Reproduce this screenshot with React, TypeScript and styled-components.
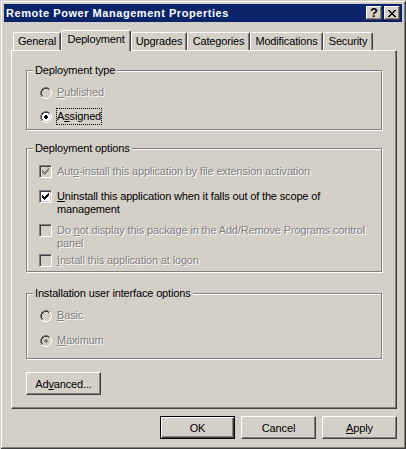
import React from 'react';
import styled, { createGlobalStyle } from 'styled-components';

// classic win2000 palette
const FACE = '#D4D0C8';
const SHADOW = '#808080';
const DARK = '#404040';

const GlobalStyle = createGlobalStyle`
  html, body { margin: 0; padding: 0; background: ${FACE}; }
  body {
    font-family: "Liberation Sans", Arial, sans-serif;
    font-size: 11px;
    letter-spacing: -0.15px;
    color: #000;
  }
`;

const Window = styled.div`
  box-sizing: border-box;
  width: 406px;
  height: 449px;
  padding: 4px;
  display: flex;
  flex-direction: column;
  background: ${FACE};
  box-shadow: inset 1px 1px ${FACE}, inset -1px -1px ${DARK}, inset 2px 2px #fff, inset -2px -2px ${SHADOW};
`;

const TitleBar = styled.div`
  height: 18px;
  display: flex;
  align-items: center;
  padding: 0 2px 0 2px;
  background: #0a246a;
`;

const TitleText = styled.div`
  flex: 1;
  color: #fff;
  font-weight: bold;
  font-size: 11px;
  letter-spacing: 0.55px;
  white-space: nowrap;
`;

const Captions = styled.div`
  display: flex;
  gap: 2px;
`;

const CaptionButton = styled.div`
  box-sizing: border-box;
  width: 16px;
  height: 14px;
  display: flex;
  align-items: center;
  justify-content: center;
  background: ${FACE};
  box-shadow: inset -1px -1px ${DARK}, inset 1px 1px #fff, inset -2px -2px ${SHADOW};
  font-weight: bold;
  font-size: 13px;
  line-height: 12px;
`;

const Body = styled.div`
  display: flex;
  flex-direction: column;
  padding: 8px 0 0 7px;
`;

const TabStrip = styled.div`
  display: flex;
  align-items: flex-end;
  height: 20px;
  padding-left: 2px;
  position: relative;
  z-index: 1;
`;

const Tab = styled.div<{ $w: number; $active?: boolean }>`
  box-sizing: border-box;
  width: ${(p) => p.$w}px;
  height: ${(p) => (p.$active ? 21 : 18)}px;
  margin-bottom: ${(p) => (p.$active ? -1 : 0)}px;
  padding-top: 2px;
  background: ${FACE};
  border-top: 1px solid #fff;
  border-left: 1px solid #fff;
  border-right: 1px solid ${DARK};
  border-radius: 2px 2px 0 0;
  box-shadow: inset -1px 0 ${SHADOW};
  text-align: center;
  line-height: 13px;
  white-space: nowrap;
`;

const Panel = styled.div`
  box-sizing: border-box;
  width: 386px;
  height: 359px;
  padding: 13px 14px 0 14px;
  display: flex;
  flex-direction: column;
  align-items: flex-start;
  background: ${FACE};
  border: 1px solid;
  border-color: #fff ${DARK} ${DARK} #fff;
  box-shadow: inset -1px -1px ${SHADOW};
`;

const Group = styled.fieldset<{ $h: number; $mt?: number }>`
  box-sizing: border-box;
  width: 356px;
  height: ${(p) => p.$h}px;
  margin: ${(p) => p.$mt ?? 0}px 0 0 0;
  padding: 0;
  border: 1px solid ${SHADOW};
  box-shadow: inset 1px 1px #fff, 1px 1px #fff;
  min-inline-size: 0;
`;

const Legend = styled.legend`
  margin-left: 6px;
  padding: 0 2px;
  line-height: 13px;
  background: ${FACE};
`;

const Option = styled.div<{ $mt: number; $indent: number }>`
  display: flex;
  align-items: flex-start;
  gap: 5px;
  margin-top: ${(p) => p.$mt}px;
  padding-left: ${(p) => p.$indent}px;
  line-height: 13px;
`;

const Indicator = styled.div<{ $mt?: number }>`
  flex-shrink: 0;
  margin-top: ${(p) => p.$mt ?? 0}px;
  display: flex;
  svg { display: block; }
`;

const CheckBox = styled.div<{ $disabled?: boolean }>`
  box-sizing: border-box;
  width: 13px;
  height: 13px;
  flex-shrink: 0;
  display: flex;
  align-items: center;
  justify-content: center;
  border: 1px solid;
  border-color: ${SHADOW} #fff #fff ${SHADOW};
  box-shadow: inset 1px 1px ${DARK}, inset -1px -1px ${FACE};
  background: ${(p) => (p.$disabled ? FACE : '#fff')};
  svg { display: block; }
`;

const Label = styled.span<{ $disabled?: boolean; $focus?: boolean }>`
  color: ${(p) => (p.$disabled ? SHADOW : '#000')};
  text-shadow: ${(p) => (p.$disabled ? '1px 1px 0 #fff' : 'none')};
  white-space: nowrap;
  ${(p) =>
    p.$focus &&
    `
    border: 1px dotted #000;
    padding: 1px 0;
    margin: -2px -1px;
  `}
`;

const Accel = styled.span`
  text-decoration: underline;
`;

const Button = styled.button<{ $default?: boolean; $mt?: number }>`
  box-sizing: border-box;
  width: 75px;
  height: 23px;
  margin: ${(p) => p.$mt ?? 0}px 0 0 0;
  padding: 0;
  font-family: inherit;
  font-size: 11px;
  letter-spacing: inherit;
  color: #000;
  background: ${FACE};
  border: 1px solid;
  border-color: ${(p) => (p.$default ? '#000' : `#fff ${DARK} ${DARK} #fff`)};
  box-shadow: ${(p) =>
    p.$default
      ? `inset 1px 1px #fff, inset -1px -1px ${DARK}, inset -2px -2px ${SHADOW}`
      : `inset -1px -1px ${SHADOW}`};
`;

const Footer = styled.div`
  width: 386px;
  display: flex;
  justify-content: flex-end;
  gap: 6px;
  margin-top: 7px;
`;

const Pixels: React.FC<{ rows: string[]; colors: Record<string, string> }> = ({ rows, colors }) => (
  <svg width={rows[0].length} height={rows.length} shapeRendering="crispEdges">
    {rows.flatMap((row, y) =>
      row.split('').map((c, x) =>
        c === '.' ? null : <rect key={`${x}-${y}`} x={x} y={y} width={1} height={1} fill={colors[c]} />
      )
    )}
  </svg>
);

const RADIO = [
  '....gggg....',
  '..ggddddgg..',
  '.gddiiiidfw.',
  '.gdiiiiiifw.',
  'gdiiiiiiiifw',
  'gdiiiiiiiifw',
  'gdiiiiiiiifw',
  'gdiiiiiiiifw',
  '.gdiiiiiifw.',
  '.gffiiiiffw.',
  '..wwffffww..',
  '....wwww....',
];
const DOT = ['5,4', '6,4', '4,5', '5,5', '6,5', '7,5', '4,6', '5,6', '6,6', '7,6', '5,7', '6,7'];

const Radio: React.FC<{ checked?: boolean; disabled?: boolean }> = ({ checked, disabled }) => {
  const rows = RADIO.map((r, y) =>
    r
      .split('')
      .map((c, x) => (checked && DOT.includes(`${x},${y}`) ? 'k' : c))
      .join('')
  );
  return (
    <Indicator $mt={1}>
      <Pixels
        rows={rows}
        colors={{ g: SHADOW, w: '#fff', d: DARK, f: FACE, i: disabled ? FACE : '#fff', k: disabled ? SHADOW : '#000' }}
      />
    </Indicator>
  );
};

const CHECK = ['......x', '.....xx', 'x...xxx', 'xx.xxx.', 'xxxxx..', '.xxx...', '..x....'];

const Check: React.FC<{ checked?: boolean; disabled?: boolean }> = ({ checked, disabled }) => (
  <CheckBox $disabled={disabled}>
    {checked && <Pixels rows={CHECK} colors={{ x: disabled ? SHADOW : '#000' }} />}
  </CheckBox>
);

const CLOSE = ['xx....xx', '.xx..xx.', '..xxxx..', '...xx...', '..xxxx..', '.xx..xx.', 'xx....xx'];

const tabs = [
  { name: 'General', w: 48 },
  { name: 'Deployment', w: 70, active: true },
  { name: 'Upgrades', w: 56 },
  { name: 'Categories', w: 63 },
  { name: 'Modifications', w: 73 },
  { name: 'Security', w: 50 },
];

const App: React.FC = () => {
  return (
    <>
      <GlobalStyle />
      <Window>
        <TitleBar>
          <TitleText>Remote Power Management Properties</TitleText>
          <Captions>
            <CaptionButton>?</CaptionButton>
            <CaptionButton>
              <Pixels rows={CLOSE} colors={{ x: '#000' }} />
            </CaptionButton>
          </Captions>
        </TitleBar>
        <Body>
          <TabStrip>
            {tabs.map((t) => (
              <Tab key={t.name} $w={t.w} $active={t.active}>
                {t.name}
              </Tab>
            ))}
          </TabStrip>
          <Panel>
            <Group $h={66}>
              <Legend>Deployment type</Legend>
              <Option $mt={9} $indent={13}>
                <Radio disabled />
                <Label $disabled>
                  <Accel>P</Accel>ublished
                </Label>
              </Option>
              <Option $mt={11} $indent={13}>
                <Radio checked />
                <Label $focus>
                  A<Accel>s</Accel>signed
                </Label>
              </Option>
            </Group>

            <Group $h={130} $mt={12}>
              <Legend>Deployment options</Legend>
              <Option $mt={10} $indent={12}>
                <Check checked disabled />
                <Label $disabled>
                  Aut<Accel>o</Accel>-install this application by file extension activation
                </Label>
              </Option>
              <Option $mt={12} $indent={12}>
                <Check checked />
                <Label>
                  <Accel>U</Accel>ninstall this application when it falls out of the scope of
                  <br />
                  management
                </Label>
              </Option>
              <Option $mt={8} $indent={12}>
                <Check disabled />
                <Label $disabled>
                  Do <Accel>n</Accel>ot display this package in the Add/Remove Programs control
                  <br />
                  panel
                </Label>
              </Option>
              <Option $mt={4} $indent={12}>
                <Check disabled />
                <Label $disabled>
                  <Accel>I</Accel>nstall this application at logon
                </Label>
              </Option>
            </Group>

            <Group $h={72} $mt={15}>
              <Legend>Installation user interface options</Legend>
              <Option $mt={9} $indent={13}>
                <Radio disabled />
                <Label $disabled>
                  <Accel>B</Accel>asic
                </Label>
              </Option>
              <Option $mt={12} $indent={13}>
                <Radio checked disabled />
                <Label $disabled>
                  <Accel>M</Accel>aximum
                </Label>
              </Option>
            </Group>

            <Button $mt={13}>
              Ad<Accel>v</Accel>anced...
            </Button>
          </Panel>
          <Footer>
            <Button $default>OK</Button>
            <Button>Cancel</Button>
            <Button>
              <Accel>A</Accel>pply
            </Button>
          </Footer>
        </Body>
      </Window>
    </>
  );
};

export default App;
